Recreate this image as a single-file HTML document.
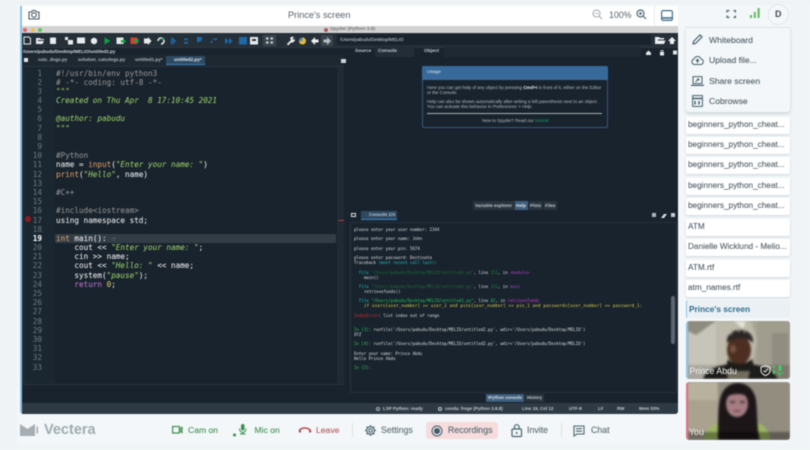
<!DOCTYPE html>
<html><head><meta charset="utf-8"><title>Prince's screen</title>
<style>
*{box-sizing:border-box}
html,body{margin:0;padding:0;width:810px;height:450px;overflow:hidden;background:#f3f7f9;font-family:"Liberation Sans",sans-serif}
.a{position:absolute}
.t{position:absolute;white-space:pre;line-height:1}
#shot{position:absolute;left:0;top:0;width:810px;height:450px;filter:blur(.45px)}
.m{font-family:"DejaVu Sans Mono","Liberation Mono",monospace;font-size:7.65px;color:#fafafa}
.ln{color:#6f7a84;text-align:right;width:14px;left:28px}
.c{color:#999}.g{color:#9fd86c;font-style:italic}.o{color:#e5a566}.p{color:#c678dd}.y{color:#e5d36a}
.k{font-family:"DejaVu Sans Mono","Liberation Mono",monospace;font-size:4.05px;color:#dcdfe2;left:354px}
.u{font-size:4.5px;color:#b4bcc2}
.f{position:absolute;left:686px;width:104px;height:17px;background:#fff;border-radius:2px;box-shadow:0 1px 2px rgba(90,110,125,.25)}
.f span{position:absolute;left:2px;top:4.3px;font-size:8.2px;line-height:1;color:#4a5963;white-space:pre;-webkit-text-stroke:.07px #4a5963}
.s{font-size:8.6px;color:#4a5963;-webkit-text-stroke:.07px #4a5963}
.b{font-size:8.4px;line-height:1;-webkit-text-stroke:.08px currentColor}
svg{position:absolute;overflow:visible}
</style></head><body>
<div id="shot">
<div class="a" style="left:0;top:0;width:17px;height:450px;background:#f0f3f5"></div>
<div class="a" style="left:17px;top:443px;width:793px;height:7px;background:#f0f4f6"></div>
<div class="a" style="left:790px;top:0;width:20px;height:450px;background:#f0f4f6"></div>
<div class="a" style="left:0;top:0;width:810px;height:5px;background:#f0f3f5"></div>

<!-- main panel -->
<div class="a" style="left:20px;top:6px;width:658px;height:408px;background:#19232d;border-left:2px solid #8cc3ea;border-radius:0 0 3px 3px"></div>
<div class="a" style="left:22px;top:6px;width:656px;height:20px;background:#fff"></div>
<svg style="left:28px;top:9px" width="12" height="11" viewBox="0 0 12 11" fill="none" stroke="#4b5a64" stroke-width="1.100"><path d="M1 3h2.500l1-1.500h3l1 1.500H11v7H1z"/><circle cx="6" cy="6" r="2.300"/></svg>
<div class="t" style="left:288px;top:10.500px;font-size:9.200px;color:#566169">Prince's screen</div>
<svg style="left:592px;top:9px" width="11" height="11" viewBox="0 0 11 11" fill="none" stroke="#a3adb3" stroke-width="1.100"><circle cx="4.500" cy="4.500" r="3.500"/><path d="M7 7l3 3M3 4.500h3"/></svg>
<div class="t" style="left:609px;top:11px;font-size:8.800px;color:#556069">100%</div>
<svg style="left:636px;top:9px" width="11" height="11" viewBox="0 0 11 11" fill="none" stroke="#4d6a78" stroke-width="1.200"><circle cx="4.500" cy="4.500" r="3.500"/><path d="M7 7l3 3M3 4.500h3M4.500 3v3"/></svg>
<div class="a" style="left:654px;top:6px;width:1px;height:20px;background:#e3e8eb"></div>
<svg style="left:661px;top:9.500px" width="12" height="11" viewBox="0 0 12 11" fill="none" stroke="#3f6f89" stroke-width="1.200"><rect x=".6" y=".6" width="10.800" height="9.800" rx="1.500"/><path d="M1 8h10" stroke-width="1.600"/></svg>

<!-- spyder title bar -->
<div class="a" style="left:22px;top:26px;width:656px;height:7px;background:#d2d2d2"></div>
<div class="a" style="left:23px;top:28px;width:4px;height:4px;border-radius:50%;background:#ee5f5a"></div>
<div class="a" style="left:31px;top:28px;width:4px;height:4px;border-radius:50%;background:#f5bd4f"></div>
<div class="a" style="left:38px;top:28px;width:4px;height:4px;border-radius:50%;background:#5fc454"></div>
<div class="a" style="left:324px;top:28px;width:4px;height:4px;border-radius:50%;background:#a65a5a"></div>
<div class="t" style="left:330px;top:27.500px;font-size:4.800px;color:#777;font-weight:bold">Spyder (Python 3.8)</div>

<!-- toolbar -->
<div class="a" style="left:22px;top:33px;width:656px;height:14px;background:#252f38"></div>
<svg style="left:22px;top:33px" width="656" height="14" viewBox="22 33 656 14">
<g fill="#e8ecef">
<path d="M24 37h5l1.500 1.500V44H24z" fill="none" stroke="#e8ecef"/>
<path d="M36 38h4l1 1h3v1h-6l-2 4z"/><path d="M37 41h7l-1.500 3H36z"/>
<rect x="50" y="37.500" width="6" height="6.500" rx=".8"/>
<rect x="65" y="37" width="3" height="3"/><rect x="68" y="40" width="5" height="4.500"/>
<rect x="77" y="37.500" width="8" height="6"/>
<circle cx="94" cy="41" r="3.200"/>
</g>
<path d="M104.500 37.500l6 3.500-6 3.500z" fill="#0d9e44"/>
<rect x="116.500" y="37.500" width="7" height="6.500" fill="#e8e8e8"/><rect x="121" y="40" width="4.500" height="2.500" fill="#15a545"/>
<rect x="130.500" y="37.500" width="7" height="6.500" fill="#dd3b30"/><rect x="134" y="39" width="4.500" height="3.500" fill="#15a545"/>
<path d="M144 38.500h4V37l3.500 4-3.500 4v-1.500h-4z" fill="#e8ecef"/>
<path d="M158 41a3 3 0 1 1 3 3" fill="none" stroke="#e8ecef" stroke-width="1.600"/><circle cx="163" cy="39" r="1.300" fill="#15a545"/>
<g fill="#1c69a8">
<path d="M171 37.500h1.500v7H171zM173 37.500l3 3.500-3 3.500z"/>
<rect x="184" y="38.500" width="4" height="1.700"/><rect x="184" y="42" width="4" height="1.700"/>
<path d="M197 37h5v3l-2 2h-3z"/>
<path d="M211 40h6v-2l-4 1-3 4h3z"/>
<path d="M225 37.500l3.500 3.500-3.500 3.500zM229 37.500l3.500 3.500-3.500 3.500z"/>
<rect x="239" y="37" width="8" height="7.500"/>
</g>
<rect x="250" y="37" width="8" height="7.500" fill="#e8ecef"/><rect x="252" y="39" width="4" height="2" fill="#252f38"/>
<rect x="263" y="35" width="13" height="11" fill="#3a444c"/>
<g fill="#cfd5da"><rect x="266" y="37.500" width="2.500" height="2"/><rect x="270.500" y="37.500" width="2.500" height="2"/><rect x="266" y="41.500" width="2.500" height="2"/><rect x="270.500" y="41.500" width="2.500" height="2"/></g>
<path d="M287 44l4-4-1-2 2-1.500 2 1-1.500 1.500.5 1 1.500-1 .5 1.500-2 2h-2l-3 3z" fill="#eef0f2"/>
<circle cx="302.500" cy="41" r="3.500" fill="#e2b93c"/><path d="M299 41a3.500 3.500 0 0 1 3.500-3.500V41z" fill="#4f86b8"/>
<path d="M315 37l-4 4 4 4v-2.500h3.500v-3H315z" fill="#eef0f2"/>
<rect x="321" y="35" width="12" height="11" fill="#3a444c"/>
<path d="M327 37l4 4-4 4v-2.500h-3.500v-3H327z" fill="#b5bcc2"/>
</svg>
<div class="a" style="left:337px;top:34px;width:314px;height:11px;background:#19232d"></div>
<div class="t" style="left:340px;top:37.500px;font-size:4.600px;color:#d8dde1">/Users/pabudu/Desktop/MELIO</div>
<svg style="left:654px;top:36px" width="24" height="10" viewBox="0 0 24 10"><path d="M1 1h4l1 1h4v1.500H4L2 8H1z" fill="#eef0f2"/><path d="M3 4.500h8.500L10 8H2z" fill="#eef0f2"/><path d="M18 1l4 4h-2v3h-4V5h-2z" fill="#eef0f2"/></svg>

<!-- editor header -->
<div class="a" style="left:22px;top:47px;width:656px;height:1px;background:#2b3640"></div>
<div class="t" style="left:23px;top:49.500px;font-size:4.500px;font-weight:bold;color:#d3d8dc">/Users/pabudu/Desktop/MELIO/untitled2.py</div>
<div class="a" style="left:22px;top:55px;width:322px;height:11px;background:#1d2831"></div>
<div class="a" style="left:24px;top:58px;width:4px;height:4px;background:#e3e6e8"></div>
<div class="t" style="left:38px;top:58px;font-size:4.600px;font-weight:bold;color:#aeb6bc">cats_dogs.py</div>
<div class="t" style="left:78px;top:58px;font-size:4.600px;font-weight:bold;color:#aeb6bc">solution_catsdogs.py</div>
<div class="t" style="left:135px;top:58px;font-size:4.600px;font-weight:bold;color:#aeb6bc">untitled1.py*</div>
<div class="a" style="left:166px;top:56px;width:39px;height:9px;background:#2e4a63;border-bottom:1px solid #3c7fb8"></div>
<div class="t" style="left:174px;top:58px;font-size:4.600px;font-weight:bold;color:#e3e6e8">untitled2.py*</div>
<div class="a" style="left:341px;top:58.500px;width:5px;height:4px;background:#cfd4d8"></div>

<!-- editor -->
<div class="a" style="left:23px;top:66px;width:321px;height:319px;background:#19232d;border:1px solid #26323d"></div>
<div class="a" style="left:54px;top:67px;width:283px;height:317px;background:#19232d"></div>
<div class="a" style="left:24px;top:67px;width:30px;height:317px;background:#1a2630"></div>
<div class="a" style="left:337px;top:67px;width:7px;height:317px;background:#1e2a34"></div>
<div class="a" style="left:338px;top:219.500px;width:6px;height:1px;background:#b13d34"></div>
<div class="a" style="left:55px;top:233.500px;width:281px;height:9.500px;background:#323d46"></div>
<div class="a" style="left:24.500px;top:216px;width:6px;height:6px;border-radius:50%;background:#8f1c22"></div>

<div class="t m ln" style="top:69.500px">1</div><div class="t m c" style="left:56px;top:69.500px">#!/usr/bin/env python3</div>
<div class="t m ln" style="top:78.700px">2</div><div class="t m c" style="left:56px;top:78.700px"># -*- coding: utf-8 -*-</div>
<div class="t m ln" style="top:87.900px">3</div><div class="t m g" style="left:56px;top:87.900px">"""</div>
<div class="t m ln" style="top:97px">4</div><div class="t m g" style="left:56px;top:97px">Created on Thu Apr  8 17:10:45 2021</div>
<div class="t m ln" style="top:106.200px">5</div>
<div class="t m ln" style="top:115.400px">6</div><div class="t m g" style="left:56px;top:115.400px">@author: pabudu</div>
<div class="t m ln" style="top:124.600px">7</div><div class="t m g" style="left:56px;top:124.600px">"""</div>
<div class="t m ln" style="top:133.800px">8</div>
<div class="t m ln" style="top:143px">9</div>
<div class="t m ln" style="top:152.200px">10</div><div class="t m c" style="left:56px;top:152.200px">#Python</div>
<div class="t m ln" style="top:161.400px">11</div><div class="t m" style="left:56px;top:161.400px">name = <span class="o">input</span>(<span class="g">"Enter your name: "</span>)</div>
<div class="t m ln" style="top:170.600px">12</div><div class="t m" style="left:56px;top:170.600px"><span class="o">print</span>(<span class="g">"Hello"</span>, name)</div>
<div class="t m ln" style="top:179.700px">13</div>
<div class="t m ln" style="top:188.900px">14</div><div class="t m c" style="left:56px;top:188.900px">#C++</div>
<div class="t m ln" style="top:198.100px">15</div>
<div class="t m ln" style="top:207.300px">16</div><div class="t m c" style="left:56px;top:207.300px">#include&lt;iostream&gt;</div>
<div class="t m ln" style="top:216.500px">17</div><div class="t m" style="left:56px;top:216.500px">using namespace std;</div>
<div class="t m ln" style="top:225.700px">18</div>
<div class="t m ln" style="top:234.700px;color:#fff;font-weight:bold">19</div><div class="t m" style="left:56px;top:234.700px"><span class="o">int</span> main(): <span style="color:#667">▫</span></div>
<div class="t m ln" style="top:243.900px">20</div><div class="t m" style="left:56px;top:243.900px">    cout &lt;&lt; <span class="g">"Enter your name: "</span>;</div>
<div class="t m ln" style="top:253.100px">21</div><div class="t m" style="left:56px;top:253.100px">    cin &gt;&gt; name;</div>
<div class="t m ln" style="top:262.300px">22</div><div class="t m" style="left:56px;top:262.300px">    cout &lt;&lt; <span class="g">"Hello: "</span> &lt;&lt; name;</div>
<div class="t m ln" style="top:271.500px">23</div><div class="t m" style="left:56px;top:271.500px">    system(<span class="g">"pause"</span>);</div>
<div class="t m ln" style="top:280.700px">24</div><div class="t m" style="left:56px;top:280.700px">    <span class="p">return</span> <span class="y">0</span>;</div>
<div class="t m ln" style="top:289.900px">25</div>
<div class="t m ln" style="top:299.100px">26</div>
<div class="t m ln" style="top:308.300px">27</div>
<div class="t m ln" style="top:317.500px">28</div>
<div class="t m ln" style="top:326.700px">29</div>
<div class="t m ln" style="top:335.900px">30</div>
<div class="t m ln" style="top:345.100px">31</div>
<div class="t m ln" style="top:354.300px">32</div>
<div class="t m ln" style="top:363.500px">33</div>

<!-- help pane -->
<div class="t" style="left:355px;top:50px;font-size:4.800px;font-weight:bold;color:#c2c9ce">Source</div>
<div class="a" style="left:375px;top:47px;width:39px;height:10px;background:#222d37"></div>
<div class="t" style="left:378px;top:50px;font-size:4.800px;font-weight:bold;color:#c2c9ce">Console</div>
<div class="t" style="left:424px;top:50px;font-size:4.800px;font-weight:bold;color:#c2c9ce">Object</div>
<div class="a" style="left:444px;top:47px;width:197px;height:10px;background:#1e2933"></div>
<svg style="left:645px;top:49px" width="32" height="7" viewBox="0 0 32 7" fill="#e4e7ea"><path d="M1 4l2.500-2.500L6 4v2H1z"/><path d="M15 3h4v3.500h-4z"/><path d="M16 3V1.500h2V3" fill="none" stroke="#e4e7ea" stroke-width=".7"/><rect x="28" y="1.500" width="4" height="4"/></svg>
<div class="a" style="left:349px;top:58px;width:329px;height:142px;background:#19232d"></div>

<div class="a" style="left:421.500px;top:66px;width:186px;height:62px;background:#19232d;border:1px solid #2f5a80;border-radius:2px"></div>
<div class="a" style="left:421.500px;top:66px;width:186px;height:14px;background:#37699a;border-radius:2px 2px 0 0"></div>
<div class="t" style="left:427px;top:70.500px;font-size:4.800px;color:#dce4ea">Usage</div>
<div class="t u" style="left:427px;top:85.500px">Here you can get help of any object by pressing <b style="color:#eee">Cmd+I</b> in front of it, either on the Editor</div>
<div class="t u" style="left:427px;top:91px">or the Console.</div>
<div class="t u" style="left:427px;top:99.500px">Help can also be shown automatically after writing a left parenthesis next to an object.</div>
<div class="t u" style="left:427px;top:105px">You can activate this behavior in <i>Preferences &gt; Help</i>.</div>
<div class="a" style="left:427px;top:113px;width:175px;height:1px;background:#a7afb5"></div>
<div class="t u" style="left:482px;top:119px">New to Spyder? Read our <span style="color:#1d9a68">tutorial</span></div>

<!-- tabs between panes -->
<div class="a" style="left:473px;top:201px;width:42px;height:9px;background:#2a343d"></div>
<div class="t" style="left:475px;top:203.500px;font-size:4.600px;font-weight:bold;color:#bcc4c9">Variable explorer</div>
<div class="a" style="left:515px;top:201px;width:13px;height:9px;background:#3f5f7e"></div>
<div class="t" style="left:516px;top:204px;font-size:4.600px;font-weight:bold;color:#d8dde1">Help</div>
<div class="a" style="left:529px;top:201px;width:14px;height:9px;background:#2a343d"></div>
<div class="t" style="left:530px;top:203.500px;font-size:4.600px;font-weight:bold;color:#bcc4c9">Plots</div>
<div class="a" style="left:544px;top:201px;width:13px;height:9px;background:#2a343d"></div>
<div class="t" style="left:545px;top:203.500px;font-size:4.600px;font-weight:bold;color:#bcc4c9">Files</div>

<!-- console -->
<div class="a" style="left:351px;top:213px;width:5px;height:4px;border:1px solid #d8dce0"></div>
<div class="a" style="left:361px;top:211px;width:36px;height:9px;background:#2e4a63;border-bottom:1px solid #3c7fb8"></div>
<div class="t" style="left:369px;top:213px;font-size:4.600px;font-weight:bold;color:#bcc4c9">Console 1/A</div>
<div class="a" style="left:652px;top:213px;width:4px;height:4px;background:#aeb6bc"></div>
<svg style="left:661px;top:213px" width="6" height="5" viewBox="0 0 6 5"><path d="M0 5l3-4h3L3 5z" fill="#dde1e4"/></svg>
<div class="a" style="left:671px;top:213px;width:4px;height:4px;background:#c8ced2"></div>
<div class="a" style="left:350px;top:222px;width:327px;height:171px;background:#19232d;border:1px solid #25303a"></div>
<div class="a" style="left:671px;top:296px;width:4px;height:48px;background:#5b6670;border-radius:2px"></div>

<div class="t k" style="top:228px">please enter your user number: 2344</div>
<div class="t k" style="top:237px">please enter your name: John</div>
<div class="t k" style="top:247px">please enter your pin: 5674</div>
<div class="t k" style="top:256px">please enter password: Destinata</div>
<div class="t k" style="top:261px">Traceback <span style="color:#16c5c5">(most recent call last)</span>:</div>
<div class="t k" style="top:271px;left:359px"><span style="color:#16c5c5">File</span> <span style="color:#1d6e3a">"/Users/pabudu/Desktop/MELIO/untitled1.py"</span>, line <span style="color:#1d8a3a">151</span>, in <span style="color:#b23cd6">&lt;module&gt;</span></div>
<div class="t k" style="top:276px;left:364px">main()</div>
<div class="t k" style="top:285px;left:359px"><span style="color:#16c5c5">File</span> <span style="color:#1d6e3a">"/Users/pabudu/Desktop/MELIO/untitled1.py"</span>, line <span style="color:#1d8a3a">131</span>, in <span style="color:#b23cd6">main</span></div>
<div class="t k" style="top:290px;left:364px">retrievefunds()</div>
<div class="t k" style="top:299px;left:359px"><span style="color:#16c5c5">File</span> <span style="color:#25c060">"/Users/pabudu/Desktop/MELIO/untitled1.py"</span>, line <span style="color:#25c060">82</span>, in <span style="color:#d33cd6">retrievefunds</span></div>
<div class="t k" style="top:304px;left:364px;color:#e0d24a;letter-spacing:.24px">if users[user_number] == user_1 and pins[user_number] == pin_1 and passwords[user_number] == password_1:</div>
<div class="t k" style="top:314px"><span style="color:#d82a2a">IndexError</span>: list index out of range</div>
<div class="t k" style="top:328px"><span style="color:#25c060">In [3]:</span> runfile('/Users/pabudu/Desktop/MELIO/untitled2.py', wdir='/Users/pabudu/Desktop/MELIO')</div>
<div class="t k" style="top:333px">XYZ</div>
<div class="t k" style="top:342px"><span style="color:#25c060">In [4]:</span> runfile('/Users/pabudu/Desktop/MELIO/untitled2.py', wdir='/Users/pabudu/Desktop/MELIO')</div>
<div class="t k" style="top:352px">Enter your name: Prince Abdu</div>
<div class="t k" style="top:357px">Hello Prince Abdu</div>
<div class="t k" style="top:366px;color:#25c060">In [5]:</div>

<!-- bottom tabs & status -->
<div class="a" style="left:486px;top:394px;width:38px;height:8px;background:#3f5f7e"></div>
<div class="t" style="left:488px;top:396px;font-size:4.400px;font-weight:bold;color:#d8dde1">IPython console</div>
<div class="a" style="left:525px;top:394px;width:19px;height:8px;background:#2a343d"></div>
<div class="t" style="left:527px;top:396px;font-size:4.400px;font-weight:bold;color:#bcc4c9">History</div>
<div class="a" style="left:22px;top:403px;width:656px;height:11px;background:#2e3a44;border-radius:0 0 3px 0"></div>
<div class="a" style="left:376px;top:407px;width:4px;height:4px;border:1px solid #aab3ba;border-radius:50%"></div>
<div class="t" style="left:383px;top:406.500px;font-size:4.500px;font-weight:bold;color:#c3cad0">LSP Python: ready</div>
<div class="a" style="left:438px;top:407px;width:4px;height:4px;border:1px solid #c3cad0;border-radius:50%"></div>
<div class="t" style="left:445px;top:406.500px;font-size:4.500px;font-weight:bold;color:#c3cad0">conda: frege (Python 3.8.8)</div>
<div class="t" style="left:522px;top:406.500px;font-size:4.500px;font-weight:bold;color:#c3cad0">Line 19, Col 12</div>
<div class="t" style="left:569px;top:406.500px;font-size:4.500px;font-weight:bold;color:#c3cad0">UTF-8</div>
<div class="t" style="left:598px;top:406.500px;font-size:4.500px;font-weight:bold;color:#c3cad0">LF</div>
<div class="t" style="left:617px;top:406.500px;font-size:4.500px;font-weight:bold;color:#c3cad0">RW</div>
<div class="t" style="left:639px;top:406.500px;font-size:4.500px;font-weight:bold;color:#c3cad0">Mem 53%</div>

<!-- bottom bar -->
<svg style="left:20px;top:423px" width="20" height="14" viewBox="0 0 20 14" fill="#a5aeb4"><path d="M0 1l7.500 5L15 1v12H0z"/><rect x="16.500" y="3.500" width="1.500" height="7"/></svg>
<div class="t" style="left:44px;top:423px;font-size:14.500px;font-weight:bold;color:#a0abb2">Vectera</div>

<svg style="left:172px;top:425px" width="11" height="10" viewBox="0 0 11 10" fill="none" stroke="#3b8f4e" stroke-width="1.200"><rect x=".6" y="1.500" width="6.800" height="6.500"/><path d="M8 4l2-1.500v5L8 6z"/></svg>
<div class="t b" style="left:188px;top:426px;color:#3b8f4e;font-size:8.600px">Cam on</div>
<svg style="left:232px;top:424px" width="16" height="14" viewBox="0 0 16 14" fill="#3b8f4e"><rect x="9" y="0" width="3.500" height="6.500" rx="1.700"/><path d="M7.500 4.500c0 3 2 4 3.200 4s3.300-1 3.300-4" fill="none" stroke="#3b8f4e"/><rect x="10.300" y="8" width="1" height="2"/><rect x="8" y="9.500" width="5.500" height="1"/><circle cx="2.500" cy="11" r="1.500"/></svg>
<div class="t b" style="left:254.500px;top:426px;color:#3b8f4e;font-size:8.600px">Mic on</div>
<svg style="left:298px;top:426px" width="14" height="8" viewBox="0 0 14 8" fill="none" stroke="#b0444a" stroke-width="1.400"><path d="M1 5c2-4 9-4 12 0"/><path d="M1 5.500h2M11 5.500h2" stroke-width="2"/></svg>
<div class="t b" style="left:316px;top:426px;color:#b5585c;font-size:8.600px">Leave</div>
<div class="a" style="left:351.500px;top:423px;width:1px;height:14px;background:#dde3e6"></div>
<svg style="left:365px;top:425px" width="11" height="11" viewBox="0 0 11 11" fill="none" stroke="#4a6470" stroke-width="1.100"><circle cx="5.500" cy="5.500" r="1.700"/><circle cx="5.500" cy="5.500" r="3.800"/><path d="M5.500.2v1.500M5.500 9.300v1.500M.2 5.500h1.500M9.300 5.500h1.500M1.800 1.800l1 1M8.200 8.200l1 1M1.800 9.200l1-1M8.200 2.800l1-1" stroke-width="1.500"/></svg>
<div class="t b" style="left:381px;top:426px;color:#556972;font-size:8.800px">Settings</div>
<div class="a" style="left:426px;top:422px;width:72px;height:17px;background:#f6dcdc;border-radius:3px"></div>
<svg style="left:431px;top:424.500px" width="12" height="12" viewBox="0 0 12 12"><circle cx="6" cy="6" r="5" fill="none" stroke="#3c5f6e" stroke-width="1"/><circle cx="6" cy="6" r="3" fill="#3c5f6e"/></svg>
<div class="t b" style="left:448px;top:426px;color:#4d6570;font-size:8.800px">Recordings</div>
<svg style="left:511px;top:423.500px" width="12" height="13" viewBox="0 0 12 13" fill="none" stroke="#4a6470" stroke-width="1.200"><rect x="1" y="5" width="9.500" height="7.500" rx="1"/><path d="M3.500 5V3a2.300 2.300 0 0 1 4.600 0v2"/><path d="M5.700 8v2" stroke-width="1.400"/></svg>
<div class="t b" style="left:527px;top:426px;color:#556972;font-size:8.800px">Invite</div>
<div class="a" style="left:561px;top:423px;width:1px;height:14px;background:#dde3e6"></div>
<svg style="left:573px;top:424.500px" width="12" height="12" viewBox="0 0 12 12" fill="none" stroke="#4a6470" stroke-width="1.100"><path d="M1 1h10v8H4l-3 2z"/><path d="M3 3.700h6M3 6.200h6"/></svg>
<div class="t b" style="left:591px;top:426px;color:#556972;font-size:8.800px">Chat</div>

<!-- right sidebar -->
<div class="a" style="left:686px;top:27px;width:104px;height:85px;background:#f3f7f9;border-top:1px solid #dfe5e8;border-radius:0 0 3px 3px;box-shadow:0 2px 3px rgba(90,110,125,.25)"></div>
<svg style="left:727px;top:10px" width="9" height="8" viewBox="0 0 9 8" fill="none" stroke="#4d6570" stroke-width="1.200"><path d="M0 2.500V.6h2.500M6.500.6H8.400v1.900M0 5.500v1.900h2.500M6.500 7.400h1.900V5.500"/></svg>
<svg style="left:750px;top:8px" width="10" height="11" viewBox="0 0 10 11" fill="#62b55c"><rect x="0" y="7" width="2" height="3"/><rect x="3.800" y="4" width="2" height="6"/><rect x="7.600" y="0" width="2" height="10"/></svg>
<div class="a" style="left:768px;top:4px;width:21px;height:21px;border-radius:50%;border:1px solid #dfe5e8;background:#f5f8fa"></div>
<div class="t" style="left:775px;top:10px;font-size:9px;font-weight:bold;color:#3e4e58">D</div>

<svg style="left:692px;top:34px" width="11" height="11" viewBox="0 0 11 11" fill="none" stroke="#46606c" stroke-width="1.200"><path d="M1 10l.5-2.500L8 1l2 2-6.500 6.500z"/></svg>
<div class="t s" style="left:709px;top:35.500px">Whiteboard</div>
<svg style="left:691px;top:55px" width="13" height="11" viewBox="0 0 13 11" fill="none" stroke="#46606c" stroke-width="1"><path d="M3.500 9.500a2.800 2.800 0 0 1-.5-5.500A3.700 3.700 0 0 1 10 4a2.800 2.800 0 0 1 0 5.500z"/><path d="M6.500 8V4.500M5 6l1.500-1.500L8 6" stroke-width="1.200"/></svg>
<div class="t s" style="left:709px;top:56px">Upload file...</div>
<svg style="left:691px;top:76px" width="13" height="10" viewBox="0 0 13 10" fill="none" stroke="#46606c" stroke-width="1"><rect x="2" y=".6" width="9" height="7"/><path d="M0 9.400h13" stroke-width="1.200"/><path d="M4.500 6l3-3M6 3h1.800v1.800"/></svg>
<div class="t s" style="left:709px;top:76.500px">Share screen</div>
<svg style="left:692px;top:95px" width="11" height="12" viewBox="0 0 11 12" fill="none" stroke="#46606c" stroke-width="1"><rect x=".6" y=".6" width="9.800" height="10.800"/><path d="M.6 3.500h9.800" stroke-width="1.500"/><path d="M3 6v3.500M7 6v3.500" stroke-width="1.500"/></svg>
<div class="t s" style="left:709px;top:97px">Cobrowse</div>

<div class="f" style="top:116.500px"><span>beginners_python_cheat...</span></div>
<div class="f" style="top:136.800px"><span>beginners_python_cheat...</span></div>
<div class="f" style="top:157.200px"><span>beginners_python_cheat...</span></div>
<div class="f" style="top:177.500px"><span>beginners_python_cheat...</span></div>
<div class="f" style="top:198px"><span>beginners_python_cheat...</span></div>
<div class="f" style="top:218.500px"><span>ATM</span></div>
<div class="f" style="top:239px"><span>Danielle Wicklund - Melio...</span></div>
<div class="f" style="top:259.500px"><span>ATM.rtf</span></div>
<div class="f" style="top:280px"><span>atm_names.rtf</span></div>
<div class="a" style="left:686px;top:300px;width:104px;height:18px;background:#eaf0f4;border-left:1.500px solid #8cc3ea;border-radius:2px"></div>
<div class="t" style="left:689px;top:305px;font-size:8.300px;font-weight:bold;color:#2e6d8e">Prince's screen</div>

<!-- Prince video -->
<div class="a" style="left:686px;top:321px;width:104px;height:58px;background:#a39f93;border-left:2px solid #8cc3ea;border-radius:3px;overflow:hidden">
<svg style="left:0;top:0;filter:blur(1px)" width="102" height="58" viewBox="0 0 102 58">
<rect width="102" height="58" fill="#a8a496"/>
<path d="M0 0h28v58H0z" fill="#c7c4b9"/><path d="M0 0h28L8 14 0 10z" fill="#8e8b7f"/>
<path d="M28 0h35l6 20-8 38H28z" fill="#bdb9ab"/><path d="M46 0h12l-3 8z" fill="#e6e4db"/>
<path d="M69 0h33v58H69z" fill="#a09c8e"/><path d="M84 12h16v46H84z" fill="#918d80"/>
<ellipse cx="51" cy="29" rx="12" ry="15" fill="#4d2f22"/>
<path d="M39 22c-1-8 5-13 13-13s14 5 13 13c-4-4-8-5-13-4-5 0-10 1-13 4z" fill="#2b2624"/>
<path d="M42 14l3-4M50 11l3-3M56 12l2-3" stroke="#8d8d88" stroke-width="1.500"/>
<ellipse cx="45" cy="28" rx="3" ry="4" fill="#7a5340"/>
<path d="M40 38c4 6 17 7 24 0l2 8H38z" fill="#1d1512"/>
<path d="M15 58c3-10 15-13 26-15l22 0c13 2 22 6 27 15z" fill="#22211f"/>
<path d="M38 50h24l-2 8H40z" fill="#86826f"/>
<rect y="44" width="102" height="14" fill="#000" opacity=".15"/>
</svg>
</div>
<div class="t" style="left:689.500px;top:366.500px;font-size:8.800px;color:#f2f2f2">Prince Abdu</div>
<svg style="left:760px;top:365px" width="11" height="11" viewBox="0 0 11 11" fill="none" stroke="#e8e8e8" stroke-width="1"><path d="M5.500.6l4.500 1.500v3.500c0 2.500-2 4-4.500 5-2.500-1-4.500-2.500-4.500-5V2.100z"/><path d="M3.500 5.500l1.500 1.500 2.800-3"/></svg>
<svg style="left:773px;top:365px" width="12" height="11" viewBox="0 0 12 11" fill="#3fd05b"><rect x="0" y="1" width="2" height="2"/><rect x="0" y="5" width="2" height="4"/><rect x="5.500" y="0" width="3" height="6" rx="1.500"/><path d="M4 5c0 4 6 4 6 0v2c0 2-2 2-2.500 2v2h-1V9C5.500 9 4 8 4 7z"/></svg>

<!-- You video -->
<div class="a" style="left:686px;top:382px;width:104px;height:58px;background:#a69f8f;border-left:2px solid #e2708f;border-radius:3px;overflow:hidden">
<svg style="left:0;top:0;filter:blur(1px)" width="102" height="58" viewBox="0 0 102 58">
<rect width="102" height="58" fill="#938d80"/>
<path d="M0 0h30v58H0z" fill="#aaa28f"/>
<path d="M0 0h30v18H0z" fill="#c2baa6" opacity=".6"/>
<path d="M16 58c1-9 6-15 15-17h38c8 2 12 8 14 17z" fill="#9db765"/>
<path d="M30 58c0-20 0-36 3-44 3-9 10-13 17-13s14 4 17 13c3 9 1 30 5 44z" fill="#1c1618"/>
<ellipse cx="49" cy="22" rx="11" ry="13" fill="#a47c82"/>
<path d="M37 17c2-8 7-12 13-12s11 5 12 12c-4-4-8-5-12-5-5 0-10 1-13 5z" fill="#1c1618"/>
<rect x="42" y="19" width="5" height="2" fill="#4a3a3c"/><rect x="52" y="19" width="5" height="2" fill="#4a3a3c"/>
<path d="M46 29h6" stroke="#75404a" stroke-width="1.500"/>
<path d="M0 50h102v8H0z" fill="#000" opacity=".35"/>
</svg>
</div>
<div class="t" style="left:689px;top:428px;font-size:8.800px;color:#f2f2f2">You</div>
</div>
</body></html>
